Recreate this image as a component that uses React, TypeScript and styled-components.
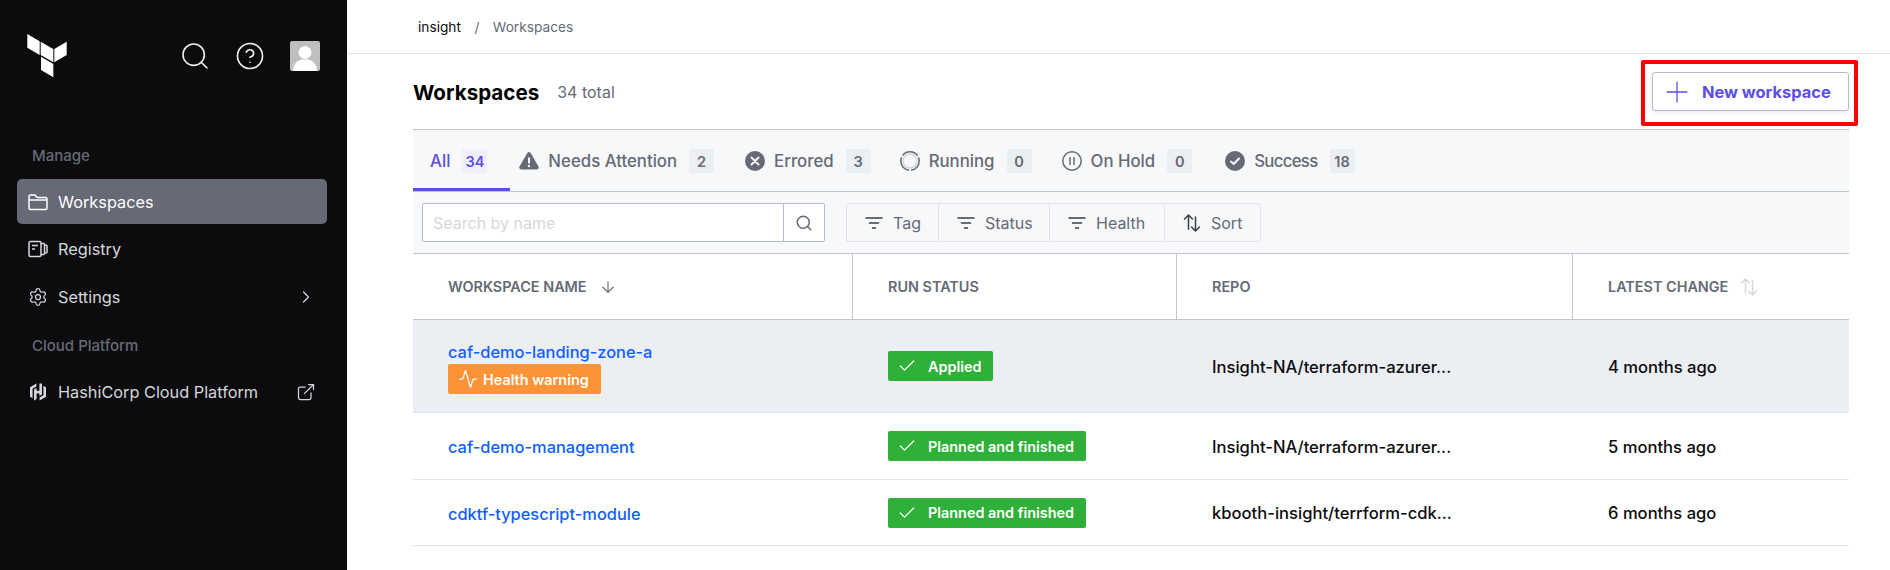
import { ReactNode } from 'react'
import {
  Activity,
  ArrowDown,
  Check,
  ChevronRight,
  CircleHelp,
  ExternalLink,
  Plus,
  Search,
  Settings,
} from 'lucide-react'
import styled, { createGlobalStyle } from 'styled-components'

const GlobalStyle = createGlobalStyle`
  html, body {
    margin: 0;
    padding: 0;
    height: 100%;
    overflow: hidden;
    background: #fff;
    font-family: Inter, "Liberation Sans", sans-serif;
  }

  * {
    box-sizing: border-box;
  }
`

const Page = styled.div`
  display: grid;
  grid-template-columns: 347px 1fr;
  height: 570px;
`

const Sidebar = styled.aside`
  background: #0c0c0e;
  color: #efeff1;
`

const SideTop = styled.div`
  display: flex;
  align-items: center;
  height: 112px;
  padding: 0 27px;
`

const SideIcons = styled.div`
  display: flex;
  align-items: center;
  gap: 24px;
  margin-left: auto;
`

const Avatar = styled.div`
  width: 30px;
  height: 30px;
  margin-left: 1px;
  border-radius: 2px;
  overflow: hidden;
  background: #bfbfbf;

  svg {
    display: block;
  }
`

const NavLabel = styled.div<{ $first?: boolean }>`
  margin: ${(p) => (p.$first ? '34px 0 13px 32px' : '16px 0 13.5px 32px')};
  height: 20px;
  font-size: 15px;
  line-height: 20px;
  font-weight: 500;
  color: #656a76;
`

const NavList = styled.nav`
  display: flex;
  flex-direction: column;
  gap: 2.75px;
  padding: 0 20px 0 17px;
`

const NavItem = styled.a<{ $active?: boolean }>`
  display: flex;
  align-items: center;
  gap: 10px;
  height: 45px;
  padding: 0 11px;
  border-radius: 5px;
  font-size: 16.3px;
  color: ${(p) => (p.$active ? '#fff' : '#d5d7db')};
  background: ${(p) => (p.$active ? '#656a76' : 'transparent')};

  svg {
    flex: none;
  }
`

const NavEnd = styled.span`
  display: flex;
  margin-left: auto;
`

const Main = styled.main`
  min-width: 0;
`

const Breadcrumb = styled.div`
  display: flex;
  align-items: center;
  height: 54px;
  padding-left: 71px;
  border-bottom: 1px solid #e3e4e8;
  font-size: 13.7px;
  color: #656a76;
`

const Crumb = styled.span`
  color: #0c0c0e;
`

const Slash = styled.span`
  margin: 0 13.5px;
`

const Content = styled.div`
  margin: 0 41px 0 66px;
`

const TitleRow = styled.div`
  display: flex;
  align-items: center;
  height: 75px;
`

const Title = styled.h1`
  margin: 0;
  padding-top: 2px;
  font-size: 20.6px;
  font-weight: 700;
  color: #000;
`

const TotalText = styled.span`
  margin-left: 18px;
  padding-top: 1px;
  font-size: 16px;
  color: #656a76;
`

const NewButton = styled.button`
  display: flex;
  align-items: center;
  gap: 8px;
  width: 197px;
  height: 39px;
  margin-left: auto;
  padding: 0 0 0 7px;
  background: #fff;
  border: 1px solid #b8bbc9;
  border-radius: 3px;
  box-shadow: 0 2px 4px rgba(101, 106, 118, 0.15);
  color: #5c4ee5;
  font: 700 16.4px Inter, sans-serif;
`

const RedFrame = styled.div`
  position: absolute;
  left: 1641px;
  top: 60px;
  width: 217px;
  height: 66px;
  border: 4px solid #ff0000;
  border-radius: 2px;
  pointer-events: none;
`

const Tabs = styled.div`
  display: flex;
  height: 63px;
  background: #f7f8fa;
  border-top: 1px solid #c2c5cb;
  border-bottom: 1px solid #c2c5cb;
`

const Tab = styled.div<{ $active?: boolean; $after?: number; $tracking?: number }>`
  display: flex;
  align-items: center;
  gap: 9px;
  height: 61px;
  margin-right: ${(p) => (p.$active ? 9 : (p.$after ?? 31))}px;
  padding: ${(p) => (p.$active ? '4px 23px 0 17px' : '4px 0 0')};
  border-bottom: 3px solid ${(p) => (p.$active ? '#5c4ee5' : 'transparent')};
  font-size: 16.8px;
  font-weight: 500;
  letter-spacing: ${(p) => p.$tracking ?? 0}px;
  color: ${(p) => (p.$active ? '#5c4ee5' : '#656a76')};

  svg {
    flex: none;
  }
`

const TabCount = styled.span<{ $active?: boolean }>`
  display: flex;
  align-items: center;
  justify-content: center;
  min-width: 25px;
  height: 24px;
  margin-left: 3px;
  padding: 0 2px;
  border-radius: 2px;
  font-size: 14.5px;
  font-weight: 600;
  letter-spacing: 0;
  background: ${(p) => (p.$active ? '#eeeefc' : '#ebeef2')};
  color: ${(p) => (p.$active ? '#5c4ee5' : '#656a76')};
`

const FilterBar = styled.div`
  display: flex;
  align-items: center;
  gap: 21px;
  height: 62px;
  padding-left: 9px;
  background: #f7f8fa;
  border-bottom: 1px solid #c2c5cb;
`

const SearchBox = styled.div`
  display: flex;
  width: 403px;
  height: 39px;
  background: #fff;
  border: 1px solid #b8bbc9;
  border-radius: 2px;
`

const SearchInput = styled.input`
  flex: 1;
  min-width: 0;
  padding: 0 10px;
  border: 0;
  outline: 0;
  background: transparent;
  font: 16px Inter, sans-serif;

  &::placeholder {
    color: #d5d7db;
    opacity: 1;
  }
`

const SearchButton = styled.div`
  display: flex;
  align-items: center;
  justify-content: center;
  width: 41px;
  border-left: 1px solid #b8bbc9;
  color: #656a76;
`

const FilterGroup = styled.div`
  display: flex;
  height: 39px;
  border: 1px solid #e3e4e8;
  border-radius: 2px;
`

const FilterButton = styled.div<{ $width: number }>`
  display: flex;
  align-items: center;
  gap: 10px;
  width: ${(p) => p.$width}px;
  padding-left: 18px;
  font-size: 16px;
  color: #656a76;

  & + & {
    border-left: 1px solid #e3e4e8;
  }

  svg {
    flex: none;
    color: #3b3d45;
  }
`

const GridRow = styled.div<{ $height: number; $highlight?: boolean; $line?: string }>`
  display: grid;
  grid-template-columns: 439px 324px 396px 277px;
  align-items: center;
  height: ${(p) => p.$height}px;
  background: ${(p) => (p.$highlight ? '#ebeef2' : '#fff')};
  border-bottom: 1px solid ${(p) => p.$line ?? '#e3e4e8'};
`

const HeadCell = styled.div`
  display: flex;
  align-items: center;
  gap: 12px;
  height: 100%;
  padding-left: 35px;
  font-size: 14.4px;
  font-weight: 600;
  color: #656a76;

  & + & {
    border-left: 1px solid #c2c5cb;
  }
`

const NameCell = styled.div`
  display: flex;
  flex-direction: column;
  align-items: flex-start;
  padding: 2px 0 0 35px;
`

const WorkspaceLink = styled.a`
  font-size: 16.4px;
  line-height: 24px;
  font-weight: 500;
  color: #1060ff;
`

const Badge = styled.span<{ $tone: 'green' | 'orange' }>`
  display: inline-flex;
  align-items: center;
  height: 30px;
  border-radius: 2px;
  font-size: 14.4px;
  font-weight: 600;
  color: #fff;
  background: ${(p) => (p.$tone === 'green' ? '#2eb039' : '#fd9337')};
`

const HealthBadge = styled(Badge)`
  gap: 5px;
  padding: 0 12px 0 10px;
`

const StatusBadge = styled(Badge)`
  gap: 11px;
  padding: 0 12px 0 9px;
`

const StatusCell = styled.div`
  padding-left: 36px;
`

const TextCell = styled.div`
  padding: 1px 0 0 36px;
  font-size: 16.6px;
  font-weight: 500;
  color: #0c0c0e;
`

const TerraformLogo = () => (
  <svg width="40" height="44" viewBox="27 35 40 44" fill="#fff">
    <polygon points="27.3,35 39.7,42.3 39.7,56 27.3,48.7" />
    <polygon points="40.7,42.7 53.3,50 53.3,63.3 40.7,56" />
    <polygon points="54.3,50 66.7,42.7 66.7,56 54.3,63.3" />
    <polygon points="41,57.7 53.3,65 53.3,78.3 41,71" />
  </svg>
)

const AvatarIcon = () => (
  <svg width="30" height="30" viewBox="0 0 30 30" fill="#fff">
    <circle cx="15" cy="11.5" r="6.5" />
    <path d="M3 30c0-7 4-10 8-11.5h8c4 1.500 8 4.500 8 11.500z" />
  </svg>
)

const FolderIcon = () => (
  <svg width="20" height="20" viewBox="0 0 20 20" fill="none" stroke="currentColor" strokeWidth="1.5">
    <path d="M1 4.500a1.500 1.500 0 0 1 1.500-1.500h4.500l2 2.500h8.500a1.500 1.500 0 0 1 1.500 1.500v9a1.500 1.500 0 0 1-1.500 1.500h-15a1.500 1.500 0 0 1-1.500-1.500z" />
    <path d="M1 8h18" />
  </svg>
)

const RegistryIcon = () => (
  <svg width="20" height="20" viewBox="0 0 20 20" fill="none" stroke="currentColor" strokeWidth="1.5">
    <rect x="1" y="2.500" width="12" height="15" rx="1.500" />
    <path d="M4 6.500h6M4 10h3M13 4.500h2.500a1 1 0 0 1 1 1v9a1 1 0 0 1-1 1H13M16.500 6h1.500a1 1 0 0 1 1 1v6a1 1 0 0 1-1 1h-1.500" />
  </svg>
)

const HashicorpIcon = () => (
  <svg width="20" height="20" viewBox="0 0 20 20" fill="currentColor">
    <path d="M8.400 1.500 2 5.200v9.600l2.600 1.500V6.700l3.800-2.200z" />
    <path d="M11.400 1.500v7.200H8.600V6.100L6 7.600v10.900l2.600-1.500v-5.600h2.800v2.500l2.600-1.500V1.500z" />
    <path d="M15.400 3.700v9.600l-3.800 2.200v3l6.400-3.700V5.200z" />
  </svg>
)

const WarningIcon = () => (
  <svg width="20" height="20" viewBox="0 0 20 20" fill="#656a76">
    <path d="M8.300 2c.8-1.300 2.600-1.300 3.400 0l7.800 13.500c.7 1.300-.2 2.900-1.700 2.900H2.200c-1.500 0-2.400-1.600-1.700-2.900z" />
    <rect x="9" y="6.500" width="2" height="6" fill="#f7f8fa" />
    <circle cx="10" cy="15" r="1.200" fill="#f7f8fa" />
  </svg>
)

const ErrorIcon = () => (
  <svg width="20" height="20" viewBox="0 0 20 20">
    <circle cx="10" cy="10" r="10" fill="#656a76" />
    <path d="M6.500 6.500l7 7M13.500 6.500l-7 7" stroke="#f7f8fa" strokeWidth="2" strokeLinecap="round" />
  </svg>
)

const RunningIcon = () => (
  <svg width="20" height="20" viewBox="0 0 20 20" fill="none">
    <circle cx="10" cy="10" r="7" stroke="#d5d7db" strokeWidth="1.500" />
    <circle cx="10" cy="10" r="9.200" stroke="#656a76" strokeWidth="1.500" strokeDasharray="17.300 2" strokeDashoffset="4" />
  </svg>
)

const PauseIcon = () => (
  <svg width="20" height="20" viewBox="0 0 20 20" fill="none" stroke="#656a76" strokeWidth="1.500">
    <circle cx="10" cy="10" r="9.200" />
    <path d="M8 6.500v7M12 6.500v7" strokeLinecap="round" />
  </svg>
)

const SuccessIcon = () => (
  <svg width="20" height="20" viewBox="0 0 20 20">
    <circle cx="10" cy="10" r="10" fill="#656a76" />
    <path d="M6 10.500l2.700 2.500L14 7.500" fill="none" stroke="#f7f8fa" strokeWidth="2" strokeLinecap="round" strokeLinejoin="round" />
  </svg>
)

const FilterIcon = () => (
  <svg width="18" height="18" viewBox="0 0 18 18" fill="none" stroke="currentColor" strokeWidth="1.500" strokeLinecap="round">
    <path d="M1 4h16M4.500 9h9M7.500 14h3" />
  </svg>
)

const SortIcon = ({ color = 'currentColor' }: { color?: string }) => (
  <svg width="18" height="20" viewBox="0 0 18 20" fill="none" stroke={color} strokeWidth="1.500" strokeLinecap="round" strokeLinejoin="round">
    <path d="M5.500 16V2M1.500 6l4-4 4 4M12.500 4v14M8.500 14l4 4 4-4" />
  </svg>
)

type TabData = { label: string; count: number; icon: ReactNode; after: number; tracking?: number }

const tabs: TabData[] = [
  { label: 'Needs Attention', count: 2, icon: <WarningIcon />, after: 31 },
  { label: 'Errored', count: 3, icon: <ErrorIcon />, after: 29 },
  { label: 'Running', count: 0, icon: <RunningIcon />, after: 30 },
  { label: 'On Hold', count: 0, icon: <PauseIcon />, after: 33 },
  { label: 'Success', count: 18, icon: <SuccessIcon />, after: 0, tracking: -0.7 },
]

const rows = [
  { name: 'caf-demo-management', status: 'Planned and finished', repo: 'Insight-NA/terraform-azurer...', changed: '5 months ago', height: 67 },
  { name: 'cdktf-typescript-module', status: 'Planned and finished', repo: 'kbooth-insight/terrform-cdk...', changed: '6 months ago', height: 66 },
]

export default function App() {
  return (
    <Page>
      <GlobalStyle />
      <Sidebar>
        <SideTop>
          <TerraformLogo />
          <SideIcons>
            <Search size={32} strokeWidth={1.2} />
            <CircleHelp size={30} strokeWidth={1.3} />
            <Avatar>
              <AvatarIcon />
            </Avatar>
          </SideIcons>
        </SideTop>
        <NavLabel $first>Manage</NavLabel>
        <NavList>
          <NavItem $active>
            <FolderIcon />
            Workspaces
          </NavItem>
          <NavItem>
            <RegistryIcon />
            Registry
          </NavItem>
          <NavItem>
            <Settings size={20} strokeWidth={1.5} />
            Settings
            <NavEnd>
              <ChevronRight size={20} strokeWidth={1.5} />
            </NavEnd>
          </NavItem>
        </NavList>
        <NavLabel>Cloud Platform</NavLabel>
        <NavList>
          <NavItem>
            <HashicorpIcon />
            HashiCorp Cloud Platform
            <NavEnd>
              <ExternalLink size={20} strokeWidth={1.5} />
            </NavEnd>
          </NavItem>
        </NavList>
      </Sidebar>
      <Main>
        <Breadcrumb>
          <Crumb>insight</Crumb>
          <Slash>/</Slash>
          Workspaces
        </Breadcrumb>
        <Content>
          <TitleRow>
            <Title>Workspaces</Title>
            <TotalText>34 total</TotalText>
            <NewButton>
              <Plus size={34} strokeWidth={0.9} />
              New workspace
            </NewButton>
          </TitleRow>
          <Tabs>
            <Tab $active>
              All
              <TabCount $active>34</TabCount>
            </Tab>
            {tabs.map((tab) => (
              <Tab key={tab.label} $after={tab.after} $tracking={tab.tracking}>
                {tab.icon}
                {tab.label}
                <TabCount>{tab.count}</TabCount>
              </Tab>
            ))}
          </Tabs>
          <FilterBar>
            <SearchBox>
              <SearchInput placeholder="Search by name" />
              <SearchButton>
                <Search size={18} strokeWidth={2} />
              </SearchButton>
            </SearchBox>
            <FilterGroup>
              <FilterButton $width={91}>
                <FilterIcon />
                Tag
              </FilterButton>
              <FilterButton $width={111}>
                <FilterIcon />
                Status
              </FilterButton>
              <FilterButton $width={115}>
                <FilterIcon />
                Health
              </FilterButton>
              <FilterButton $width={96}>
                <SortIcon />
                Sort
              </FilterButton>
            </FilterGroup>
          </FilterBar>
          <GridRow $height={66} $line="#c2c5cb">
            <HeadCell>
              WORKSPACE NAME
              <ArrowDown size={18} strokeWidth={1.5} />
            </HeadCell>
            <HeadCell>RUN STATUS</HeadCell>
            <HeadCell>REPO</HeadCell>
            <HeadCell>
              LATEST CHANGE
              <SortIcon color="#d5d7db" />
            </HeadCell>
          </GridRow>
          <GridRow $height={93} $highlight>
            <NameCell>
              <WorkspaceLink>caf-demo-landing-zone-a</WorkspaceLink>
              <HealthBadge $tone="orange">
                <Activity size={20} strokeWidth={1.5} />
                Health warning
              </HealthBadge>
            </NameCell>
            <StatusCell>
              <StatusBadge $tone="green">
                <Check size={20} strokeWidth={1.5} />
                Applied
              </StatusBadge>
            </StatusCell>
            <TextCell>Insight-NA/terraform-azurer...</TextCell>
            <TextCell>4 months ago</TextCell>
          </GridRow>
          {rows.map((row) => (
            <GridRow key={row.name} $height={row.height}>
              <NameCell>
                <WorkspaceLink>{row.name}</WorkspaceLink>
              </NameCell>
              <StatusCell>
                <StatusBadge $tone="green">
                  <Check size={20} strokeWidth={1.5} />
                  {row.status}
                </StatusBadge>
              </StatusCell>
              <TextCell>{row.repo}</TextCell>
              <TextCell>{row.changed}</TextCell>
            </GridRow>
          ))}
        </Content>
      </Main>
      <RedFrame />
    </Page>
  )
}
